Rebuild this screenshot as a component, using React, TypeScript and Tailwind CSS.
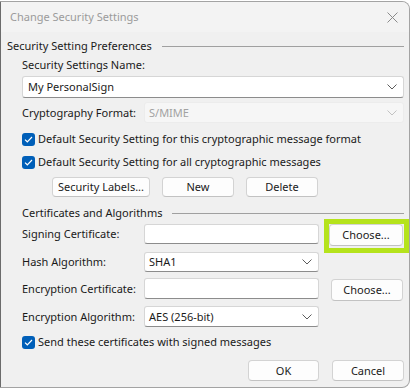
import React from "react"

function Chevron({ color = "#5c5c5c" }: { color?: string }) {
  return (
    <svg width="10" height="6" viewBox="0 0 10 6" className="shrink-0">
      <path d="M0.5 0.5 L5 5 L9.5 0.5" fill="none" stroke={color} strokeWidth="1" />
    </svg>
  )
}

function Check({ label }: { label: string }) {
  return (
    <div className="flex items-center h-[16px]">
      <div className="w-[13px] h-[13px] rounded-[3px] bg-[#005fb8] flex items-center justify-center">
        <svg width="9" height="7" viewBox="0 0 9 7">
          <path d="M1 3.6 L3.3 5.8 L8 1" fill="none" stroke="#fff" strokeWidth="1.2" />
        </svg>
      </div>
      <span className="ml-[3px] text-[#1a1a1a]">{label}</span>
    </div>
  )
}

function Btn({ label, className = "" }: { label: string; className?: string }) {
  return (
    <div
      className={`flex items-center justify-center bg-[#fdfdfd] border border-[#d3d3d3] border-b-[#c2c2c2] rounded-[4px] text-[#1a1a1a] ${className}`}
    >
      {label}
    </div>
  )
}

function Combo({ value, className = "" }: { value: string; className?: string }) {
  return (
    <div
      className={`flex items-center justify-between bg-white border border-[#d6d6d6] border-b-[#8c8c8c] rounded-[3px] pl-[4px] pr-[6px] ${className}`}
    >
      <span className="text-[#1a1a1a]">{value}</span>
      <Chevron />
    </div>
  )
}

function Field({ className = "" }: { className?: string }) {
  return <div className={`bg-white border border-[#d6d6d6] border-b-[#8c8c8c] rounded-[3px] ${className}`} />
}

export default function App() {
  return (
    <div className="w-[411px] h-[389px] bg-white overflow-hidden whitespace-nowrap font-['Noto_Sans',sans-serif] text-[11px] leading-[16px]">
      <div className="mt-px w-[410px] h-[387px] border border-[#a3a3a3] border-l-[#6b6b6b] rounded-r-[8px] bg-[#f0f0f0] flex flex-col overflow-hidden">
        {/* Title bar */}
        <div className="h-[30px] bg-[#f3f3f3] flex items-center justify-between pl-[9px] pr-[11px] shrink-0">
          <span className="text-[#9b9b9b]">Change Security Settings</span>
          <svg width="11" height="11" viewBox="0 0 11 11">
            <path d="M0.5 0.5 L10.5 10.5 M10.5 0.5 L0.5 10.5" stroke="#8a8a8a" strokeWidth="1" />
          </svg>
        </div>

        <div className="flex flex-col pl-[6px] pr-[5px]">
          {/* Group 1 */}
          <div className="mt-[6px] h-[16px] flex items-center">
            <span className="text-[#1a1a1a]">Security Setting Preferences</span>
            <div className="flex-1 ml-[10px] h-px bg-[#a0a0a0]" />
          </div>

          <div className="pl-[15px] flex flex-col">
            <div className="mt-[3px] h-[16px] text-[#1a1a1a]">Security Settings Name:</div>
            <Combo
              value="My PersonalSign"
              className="mt-[3px] h-[22px] border-[#9a9a9a] border-b-[#6e6e6e] pl-[5px]"
            />

            <div className="mt-[4px] flex items-center h-[21px]">
              <div className="w-[122px] text-[#1a1a1a]">Cryptography Format:</div>
              <div className="flex-1 h-[21px] flex items-center justify-between bg-[#f6f6f6] border border-[#ececec] rounded-[3px] pl-[4px] pr-[6px]">
                <span className="text-[#a2a2a2]">S/MIME</span>
                <Chevron color="#c2c2c2" />
              </div>
            </div>

            <div className="mt-[8px]">
              <Check label="Default Security Setting for this cryptographic message format" />
            </div>
            <div className="mt-[7px]">
              <Check label="Default Security Setting for all cryptographic messages" />
            </div>

            <div className="mt-[7px] ml-[30px] flex gap-[12px]">
              <Btn label="Security Labels..." className="w-[98px] h-[20px]" />
              <Btn label="New" className="w-[72px] h-[20px]" />
              <Btn label="Delete" className="w-[72px] h-[20px]" />
            </div>

            {/* Group 2 */}
            <div className="mt-[8px] h-[16px] flex items-center">
              <span className="text-[#1a1a1a]">Certificates and Algorithms</span>
              <div className="flex-1 ml-[10px] h-px bg-[#a0a0a0]" />
            </div>

            <div className="mt-[3px] flex items-start">
              <div className="w-[122px] h-[20px] flex items-center text-[#1a1a1a]">Signing Certificate:</div>
              <Field className="w-[175px] h-[20px]" />
              <div className="relative ml-[10px]">
                <div className="absolute -left-[5px] -top-[5px] w-[85px] h-[34px] border-[5px] border-[#b5e31c]" />
                <Btn label="Choose..." className="relative w-[74px] h-[22px]" />
              </div>
            </div>

            <div className="mt-[6px] flex items-center">
              <div className="w-[122px] text-[#1a1a1a]">Hash Algorithm:</div>
              <Combo value="SHA1" className="w-[175px] h-[20px]" />
            </div>

            <div className="mt-[6px] flex items-start">
              <div className="w-[122px] h-[21px] flex items-center text-[#1a1a1a]">Encryption Certificate:</div>
              <Field className="w-[175px] h-[21px]" />
              <Btn label="Choose..." className="ml-[12px] mt-px w-[72px] h-[22px]" />
            </div>

            <div className="mt-[5px] flex items-center">
              <div className="w-[122px] text-[#1a1a1a]">Encryption Algorithm:</div>
              <Combo value="AES (256-bit)" className="w-[175px] h-[21px]" />
            </div>

            <div className="mt-[7px]">
              <Check label="Send these certificates with signed messages" />
            </div>
          </div>

          <div className="mt-[10px] flex justify-end gap-[13px]">
            <Btn label="OK" className="w-[71px] h-[21px]" />
            <Btn label="Cancel" className="w-[72px] h-[21px]" />
          </div>
        </div>
      </div>
    </div>
  )
}
